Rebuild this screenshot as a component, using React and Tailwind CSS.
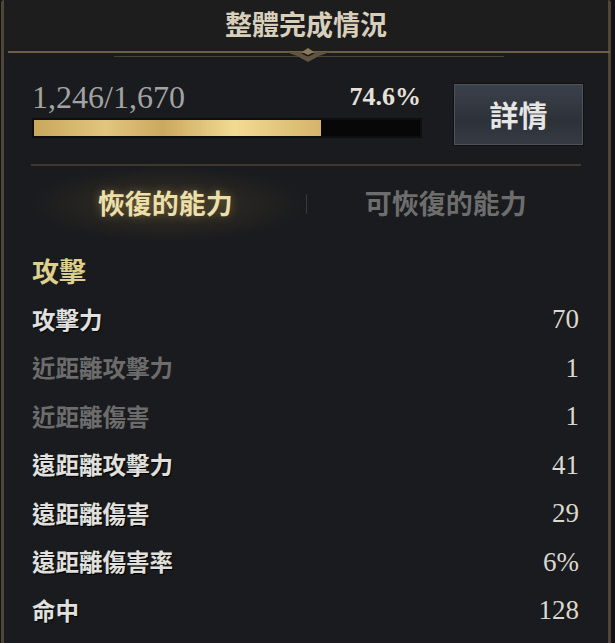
import React from "react";

const cjk = { fontFamily: '"Noto Sans CJK TC", "Noto Sans", sans-serif' };
const serif = { fontFamily: '"Liberation Serif", "DejaVu Serif", serif' };

const rows = [
  { label: "攻擊力", value: "70", dim: false },
  { label: "近距離攻擊力", value: "1", dim: true },
  { label: "近距離傷害", value: "1", dim: true },
  { label: "遠距離攻擊力", value: "41", dim: false },
  { label: "遠距離傷害", value: "29", dim: false },
  { label: "遠距離傷害率", value: "6%", dim: false },
  { label: "命中", value: "128", dim: false },
];

function Ornament() {
  return (
    <svg width="610" height="18" viewBox="0 0 610 18" className="absolute left-0 top-[45px]">
      <line x1="4" y1="7" x2="606" y2="7" stroke="#6b5f45" strokeWidth="2" />
      <line x1="110" y1="11.5" x2="500" y2="11.5" stroke="#4a4234" strokeWidth="1" />
      <path d="M282 7 L295 7 L304 12 L313 7 L326 7 L315 11 L304 17 L293 11 Z" fill="#5f5440" />
      <path d="M298 7 L304 3 L310 7 L304 10 Z" fill="#8a7a58" />
    </svg>
  );
}

export default function App() {
  return (
    <div className="w-[615px] h-[643px] bg-[#121214] overflow-hidden" style={cjk}>
      <div className="relative ml-[1px] w-[610px] h-[643px] bg-[#1a1b1e] border-x-[3px] border-[#4e4639] rounded-tl-[3px] rounded-tr-[3px]">
        {/* header */}
        <div className="h-[52px] bg-[#1d1d1e] flex items-center justify-center">
          <span className="text-[27px] font-bold text-[#d8cfbb] mb-[3px]">整體完成情況</span>
        </div>
        <Ornament />

        <div className="px-[25px] pt-[27px]">
          {/* progress */}
          <div className="flex items-start">
            <div className="w-[392px] pl-[3px]">
              <div className="flex items-end justify-between h-[34px]">
                <span className="text-[32px] leading-none text-[#a3a3a3]" style={serif}>1,246/1,670</span>
                <span className="text-[26px] leading-none font-bold text-[#e4e1da] mb-[3px]" style={serif}>74.6%</span>
              </div>
              <div className="mt-[5px] h-[20px] bg-[#070707] border-[2px] border-[#0f0f10] w-[390px]">
                <div className="h-full w-[287px] bg-[linear-gradient(90deg,#c7a85c_0%,#e2c57e_25%,#caa95f_45%,#f3da93_70%,#d4b46a_100%)]" />
              </div>
            </div>
            <div className="ml-[33px] mt-[5px] w-[130px] h-[61px] border border-[#4d535d] bg-[linear-gradient(180deg,#3b414b_0%,#2d3139_60%,#363a42_100%)] flex items-center justify-center shadow-[0_0_0_1px_#111]">
              <span className="text-[29px] font-bold text-[#e6e6e4]">詳情</span>
            </div>
          </div>

          {/* divider */}
          <div className="mt-[19px] h-[2px] bg-[#3d392f] mx-[2px]" />

          {/* tabs */}
          <div className="relative flex items-center h-[76px]">
            <div className="flex-1 flex items-center justify-center h-full bg-[radial-gradient(ellipse_closest-side,rgba(150,125,60,0.22),rgba(150,125,60,0)_100%)]">
              <span className="text-[27px] font-bold text-[#ecdfaa] [text-shadow:0_0_10px_rgba(200,170,90,0.45)] mb-[2px] mr-[4px]">恢復的能力</span>
            </div>
            <div className="w-[1px] h-[20px] bg-[#3a3a3a]" />
            <div className="flex-1 flex items-center justify-center h-full">
              <span className="text-[27px] font-bold text-[#6d6d6d] mb-[2px] ml-[2px]">可恢復的能力</span>
            </div>
          </div>

          {/* section */}
          <div className="pl-[3px] pr-[4px]">
            <div className="text-[27px] font-bold text-[#ddd08e] h-[48px] mt-[5px] flex items-center">攻擊</div>
            <div className="flex flex-col">
              {rows.map((r) => (
                <div key={r.label} className="flex items-center justify-between h-[48.5px]">
                  <span
                    className={
                      "text-[23.5px] font-bold " +
                      (r.dim ? "text-[#6c6c6c]" : "text-[#e0e0de] [text-shadow:1px_1px_1px_#000]")
                    }
                  >
                    {r.label}
                  </span>
                  <span className="text-[27px] text-[#dcd8cf]" style={serif}>{r.value}</span>
                </div>
              ))}
            </div>
          </div>
        </div>
      </div>
    </div>
  );
}
